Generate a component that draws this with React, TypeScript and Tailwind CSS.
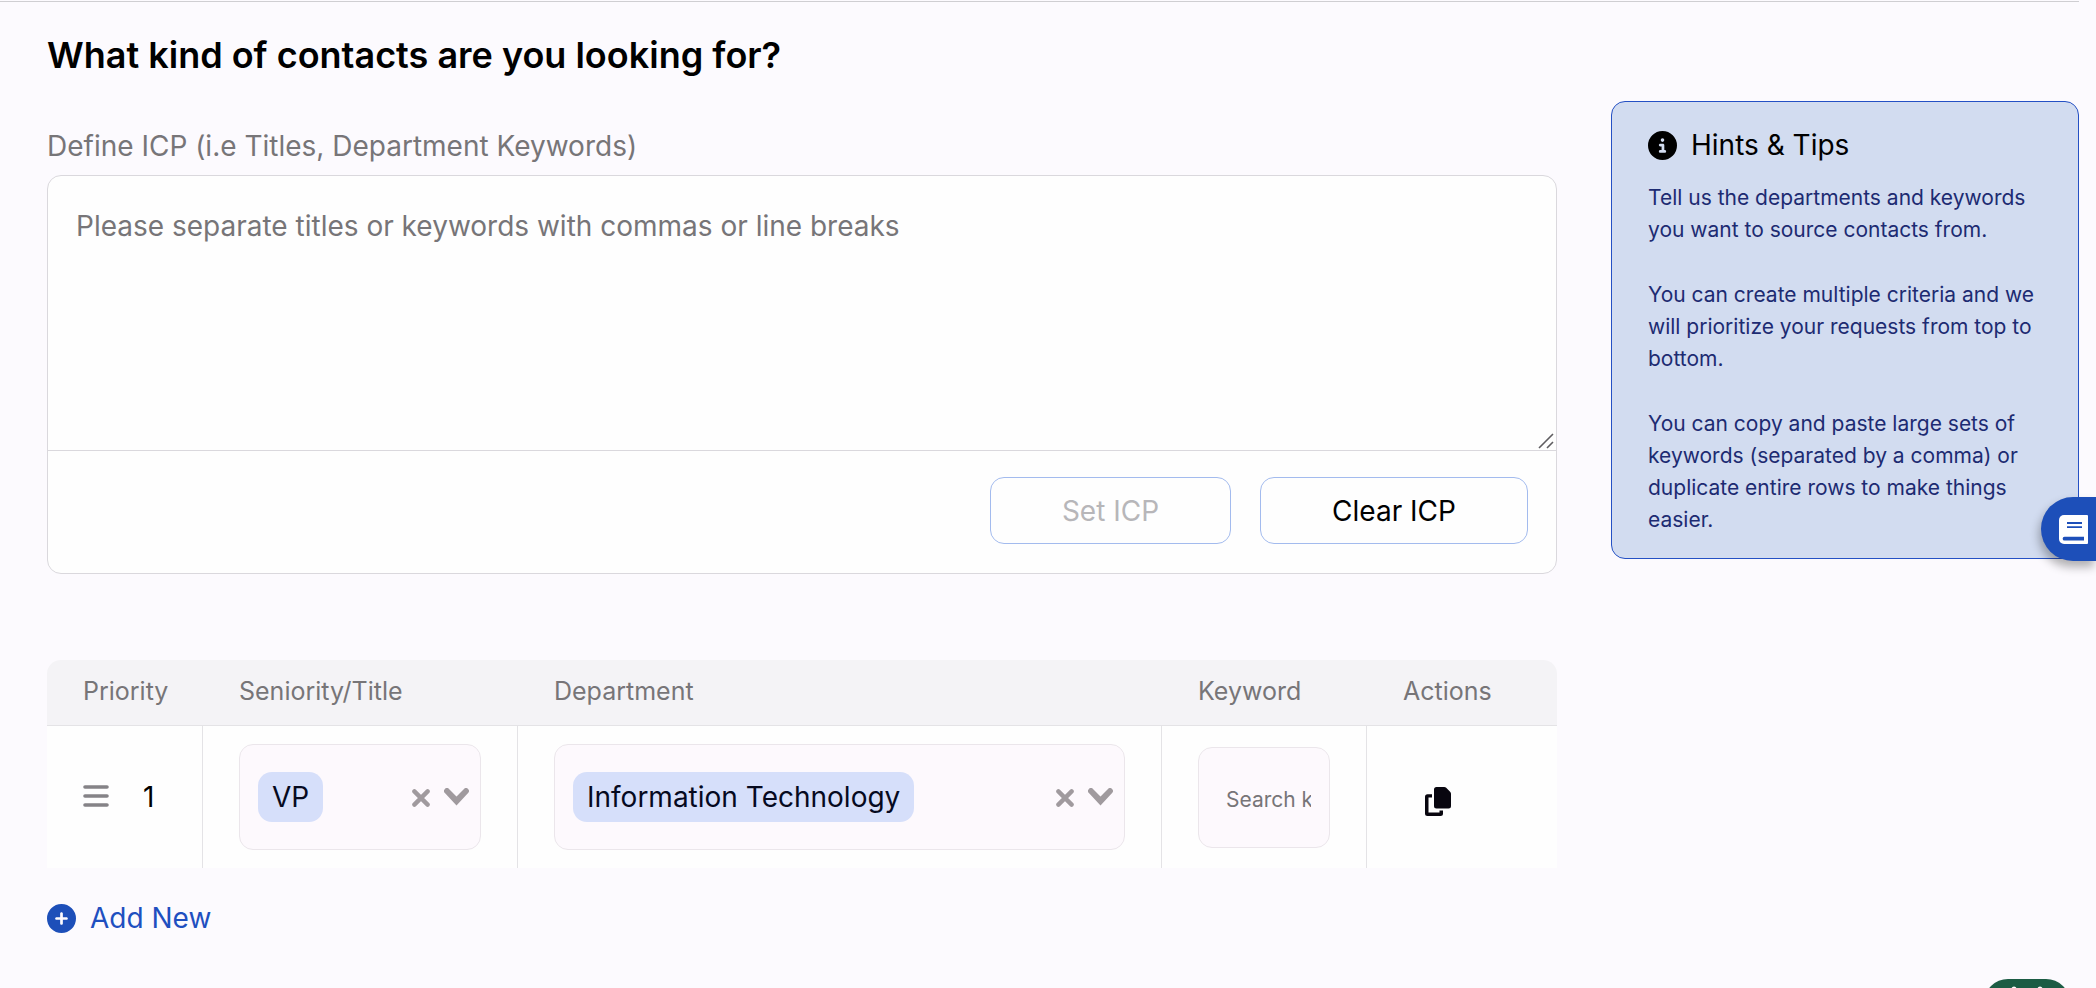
import { useState } from "react"
import { FaCircleInfo, FaCirclePlus } from "react-icons/fa6"

type Row = {
  id: number
  seniority: string[]
  department: string[]
}

const TIPS = [
  "Tell us the departments and keywords you want to source contacts from.",
  "You can create multiple criteria and we will prioritize your requests from top to bottom.",
  "You can copy and paste large sets of keywords (separated by a comma) or duplicate entire rows to make things easier.",
]

const INITIAL_ROWS: Row[] = [{ id: 1, seniority: ["VP"], department: ["Information Technology"] }]

function DragIcon() {
  return (
    <svg width="26" height="24" viewBox="0 0 26 24" fill="none" stroke="#858387" strokeWidth="3.6" strokeLinecap="round">
      <path d="M2 2h22M2 11h22M2 20h22" />
    </svg>
  )
}

function ClearIcon() {
  return (
    <svg width="18" height="20" viewBox="0 0 18 20" fill="none" stroke="#a09a9e" strokeWidth="4.4" strokeLinecap="round">
      <path d="M2.4 4.400l13.200 13.200M15.600 4.400L2.400 17.600" />
    </svg>
  )
}

function ChevronIcon() {
  return (
    <svg width="25" height="18" viewBox="0 0 25 18" fill="#a09a9e">
      <path d="M.9.9a2.9 2.9 0 0 1 4.1 0l7.5 7.6L20 .9a2.9 2.9 0 0 1 4.1 4.1L12.5 17.6.9 5a2.9 2.9 0 0 1 0-4.1z" />
    </svg>
  )
}

function CopyIcon() {
  return (
    <svg width="26" height="29" viewBox="0 0 26 29" fill="#08060f">
      <path d="M11.5 0h7.7c.8 0 1.5.3 2 .8l3.9 3.9c.6.6.9 1.3.9 2.1V19a2.5 2.5 0 0 1-2.5 2.5h-12A2.5 2.5 0 0 1 9 19V2.500A2.500 2.500 0 0 1 11.500 0z" />
      <path d="M2.5 7.2H7v3.400H3.500V25.500h11V23.500H18v3a2.500 2.500 0 0 1-2.500 2.500h-13A2.500 2.500 0 0 1 0 26.500V9.700a2.500 2.500 0 0 1 2.500-2.500z" />
    </svg>
  )
}

function BookIcon() {
  return (
    <svg width="29" height="29" viewBox="0 0 29 29">
      <path fill="#ffffff" d="M5 0h23a1 1 0 0 1 1 1v27a1 1 0 0 1-1 1H5a5 5 0 0 1-5-5V5a5 5 0 0 1 5-5z" />
      <path stroke="#1d4fb9" strokeWidth="1.8" d="M8 8h15M8 12.200h15" />
      <path fill="#1d4fb9" d="M5.500 21.800H25v3.700H5.500a1.800 1.800 0 0 1 0-3.700z" />
    </svg>
  )
}

function MultiSelect({
  label,
  values,
  onClear,
}: {
  label: string
  values: string[]
  onClear: () => void
}) {
  return (
    <div
      role="group"
      aria-label={label}
      className="flex h-[106px] items-center rounded-[14px] border border-[#ebe6eb] bg-[#fdf9fd] pr-[11px] pl-[18px]"
    >
      <div className="flex min-w-0 flex-1 gap-2">
        {values.map((value) => (
          <span
            key={value}
            className="rounded-[14px] bg-[#d6dffa] px-[14px] text-[28px] leading-[50px] whitespace-nowrap text-[#060a1f]"
          >
            {value}
          </span>
        ))}
      </div>
      <div className="flex items-center gap-[14px]">
        <button type="button" aria-label={`Clear ${label}`} onClick={onClear}>
          <ClearIcon />
        </button>
        <button type="button" aria-label={`Open ${label}`} aria-haspopup="listbox">
          <ChevronIcon />
        </button>
      </div>
    </div>
  )
}

function IcpForm() {
  const [icp, setIcp] = useState("")

  return (
    <form onSubmit={(event) => event.preventDefault()}>
      <label htmlFor="icp" className="block text-[28px] leading-[42px] text-[#777578]">
        Define ICP (i.e Titles, Department Keywords)
      </label>
      <div className="mt-2 rounded-[14px] border border-[#dad8dd] bg-[#fefefe]">
        <div className="relative">
          <textarea
            id="icp"
            value={icp}
            onChange={(event) => setIcp(event.target.value)}
            placeholder="Please separate titles or keywords with commas or line breaks"
            className="block h-[275px] w-full resize-none rounded-t-[14px] border-b border-[#dad8dd] px-7 py-[29px] text-[28px] leading-[42px] text-black outline-none placeholder:text-[#777578]"
          />
          <svg
            className="pointer-events-none absolute right-0.5 bottom-0.5"
            width="16"
            height="16"
            viewBox="0 0 16 16"
            stroke="#5f5d61"
            strokeWidth="1.6"
          >
            <path d="M1 15L15 1M9 15L15 9" />
          </svg>
        </div>
        <div className="flex justify-end gap-[29px] px-7 pt-[26px] pb-[29px]">
          <button
            type="submit"
            disabled={!icp}
            className="h-[67px] w-[241px] rounded-[14px] border border-[#a3bbee] text-[28px] text-black disabled:text-[#b7b6b9]"
          >
            Set ICP
          </button>
          <button
            type="button"
            onClick={() => setIcp("")}
            className="h-[67px] w-[268px] rounded-[14px] border border-[#a3bbee] text-[28px] text-black"
          >
            Clear ICP
          </button>
        </div>
      </div>
    </form>
  )
}

function CriteriaTable() {
  const [rows, setRows] = useState<Row[]>(INITIAL_ROWS)

  function addRow(base?: Row) {
    setRows((current) => [
      ...current,
      {
        id: Math.max(0, ...current.map((row) => row.id)) + 1,
        seniority: base?.seniority ?? [],
        department: base?.department ?? [],
      },
    ])
  }

  function updateRow(id: number, patch: Partial<Row>) {
    setRows((current) => current.map((row) => (row.id === id ? { ...row, ...patch } : row)))
  }

  return (
    <section className="mt-[86px]">
      <div className="overflow-hidden rounded-t-[14px]">
        <table className="w-full table-fixed border-separate border-spacing-0 text-left">
          <colgroup>
            <col className="w-[156px]" />
            <col className="w-[315px]" />
            <col />
            <col className="w-[205px]" />
            <col className="w-[190px]" />
          </colgroup>
          <thead className="bg-[#f4f3f6] text-[25px] text-[#777578]">
            <tr className="h-[66px]">
              {["Priority", "Seniority/Title", "Department", "Keyword", "Actions"].map((title) => (
                <th key={title} scope="col" className="border-b border-[#e4e3e6] px-9 pb-0.5 font-normal">
                  {title}
                </th>
              ))}
            </tr>
          </thead>
          <tbody className="bg-[#fefefe]">
            {rows.map((row, index) => (
              <tr key={row.id}>
                <td className="border-r border-[#e4e3e6] pl-9">
                  <div className="flex items-center gap-[34px] text-[28px]">
                    <DragIcon />
                    {index + 1}
                  </div>
                </td>
                <td className="border-r border-[#e4e3e6] px-9 py-[18px]">
                  <MultiSelect
                    label="Seniority/Title"
                    values={row.seniority}
                    onClear={() => updateRow(row.id, { seniority: [] })}
                  />
                </td>
                <td className="border-r border-[#e4e3e6] px-9 py-[18px]">
                  <MultiSelect
                    label="Department"
                    values={row.department}
                    onClear={() => updateRow(row.id, { department: [] })}
                  />
                </td>
                <td className="border-r border-[#e4e3e6] px-9">
                  <input
                    type="text"
                    aria-label="Keyword"
                    placeholder="Search keyword"
                    className="block h-[101px] w-full rounded-[14px] border border-[#ebe6eb] bg-[#fdf9fd] pt-1 pr-[18px] pl-[27px] text-[21px] outline-none placeholder:text-[#777578]"
                  />
                </td>
                <td className="px-9">
                  <button type="button" aria-label="Duplicate row" onClick={() => addRow(row)} className="mt-2 ml-[22px] block">
                    <CopyIcon />
                  </button>
                </td>
              </tr>
            ))}
          </tbody>
        </table>
      </div>

      <button
        type="button"
        onClick={() => addRow()}
        className="mt-[29px] flex items-center gap-[14px] text-[28px] leading-[42px] text-[#1f4fc0]"
      >
        <FaCirclePlus size={29} className="text-[#1d4fb9]" />
        Add New
      </button>
    </section>
  )
}

function HintsCard() {
  return (
    <aside className="mt-[99px] w-[468px] shrink-0 self-start rounded-[14px] border border-[#2450c4] bg-[#d2dcf0] px-9 py-[22px]">
      <h2 className="flex items-center gap-[14px] text-[28px] leading-[42px] text-black">
        <FaCircleInfo size={29} />
        Hints &amp; Tips
      </h2>
      <div className="mt-4 flex flex-col gap-[33px] text-[21px] leading-[32px] text-[#1d2b72]">
        {TIPS.map((tip) => (
          <p key={tip}>{tip}</p>
        ))}
      </div>
    </aside>
  )
}

export default function App() {
  return (
    <div className="relative min-h-screen overflow-hidden bg-[#fcfafe] pt-px pr-[17px] font-['Inter','Liberation_Sans',sans-serif]">
      <div className="flex gap-[54px] border-t border-[#cfced2] pl-[47px]">
        <main className="min-w-0 flex-1 pt-[31px]">
          <h1 className="mb-12 text-[36px] leading-[44px] font-semibold text-black">
            What kind of contacts are you looking for?
          </h1>
          <IcpForm />
          <CriteriaTable />
        </main>
        <HintsCard />
      </div>

      <button
        type="button"
        aria-label="Open guide"
        className="absolute top-[497px] right-0 flex h-16 w-[55px] items-center rounded-l-full bg-[#1d4fb9] pl-[18px] shadow-[-2px_6px_10px_rgba(0,0,0,0.3)]"
      >
        <BookIcon />
      </button>

      {/* Chat launcher, tucked under the bottom edge */}
      <button
        type="button"
        aria-label="Open chat"
        className="absolute right-[26px] -bottom-[39px] h-12 w-[86px] rounded-[24px] bg-[#1c5c44]"
      >
        <svg width="86" height="48" viewBox="0 0 86 48" fill="#ffffff">
          <circle cx="30" cy="10" r="2.5" />
          <circle cx="56" cy="10" r="2.5" />
        </svg>
      </button>
    </div>
  )
}
